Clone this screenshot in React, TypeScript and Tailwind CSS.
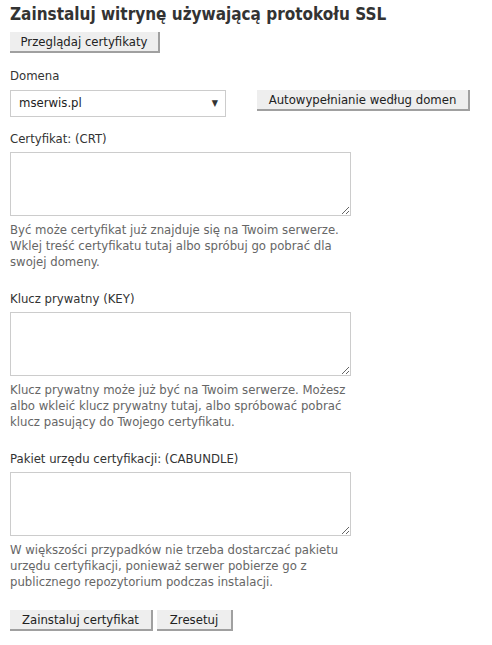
const font = "font-['DejaVu_Sans_Condensed','DejaVu_Sans',sans-serif]"

function GrayButton({ label, className = '' }: { label: string; className?: string }) {
  return (
    <button
      type="button"
      className={`h-[21px] bg-[#eeeeee] border-r-2 border-b-2 border-[#a0a0a0] px-[10px] text-[13px] leading-[19px] text-[#222] ${className}`}
    >
      {label}
    </button>
  )
}

function Field({ label, help, top }: { label: string; help: string[]; top: string }) {
  return (
    <div className={top}>
      <label className="block text-[13px] leading-[16px] text-[#333]">{label}</label>
      <textarea className="mt-[5px] block w-[341px] h-[64px] border border-[#cccccc] bg-white resize-y outline-none" />
      <p className="mt-[6px] text-[13px] leading-[16px] text-[#666]">
        {help.map((line, i) => (
          <span key={i} className="block">{line}</span>
        ))}
      </p>
    </div>
  )
}

export default function App() {
  return (
    <div className={`${font} bg-white w-[492px] h-[645px] px-[10px] pt-[3px]`}>
      <h1 className="text-[17px] leading-[22px] font-bold text-[#333]">
        Zainstaluj witrynę używającą protokołu SSL
      </h1>
      <GrayButton label="Przeglądaj certyfikaty" className="mt-[7px] w-[150px]" />

      <div className="mt-[15px] text-[13px] leading-[16px] text-[#333]">Domena</div>
      <div className="mt-[6px] flex items-start">
        <div className="relative w-[216px] h-[27px] border border-[#cccccc] bg-white">
          <span className="absolute left-[8px] top-[4px] text-[13px] leading-[16px] text-[#222]">mserwis.pl</span>
          <span className="absolute right-[7px] top-[6px] text-[9px] leading-[12px] text-[#333]">▼</span>
        </div>
        <GrayButton label="Autowypełnianie według domen" className="ml-[31px] w-[213px]" />
      </div>

      <Field
        top="mt-[14px]"
        label="Certyfikat: (CRT)"
        help={[
          'Być może certyfikat już znajduje się na Twoim serwerze.',
          'Wklej treść certyfikatu tutaj albo spróbuj go pobrać dla',
          'swojej domeny.',
        ]}
      />
      <Field
        top="mt-[21px]"
        label="Klucz prywatny (KEY)"
        help={[
          'Klucz prywatny może już być na Twoim serwerze. Możesz',
          'albo wkleić klucz prywatny tutaj, albo spróbować pobrać',
          'klucz pasujący do Twojego certyfikatu.',
        ]}
      />
      <Field
        top="mt-[21px]"
        label="Pakiet urzędu certyfikacji: (CABUNDLE)"
        help={[
          'W większości przypadków nie trzeba dostarczać pakietu',
          'urzędu certyfikacji, ponieważ serwer pobierze go z',
          'publicznego repozytorium podczas instalacji.',
        ]}
      />

      <div className="mt-[20px] flex gap-[4px]">
        <GrayButton label="Zainstaluj certyfikat" className="w-[143px]" />
        <GrayButton label="Zresetuj" className="w-[76px]" />
      </div>
    </div>
  )
}
